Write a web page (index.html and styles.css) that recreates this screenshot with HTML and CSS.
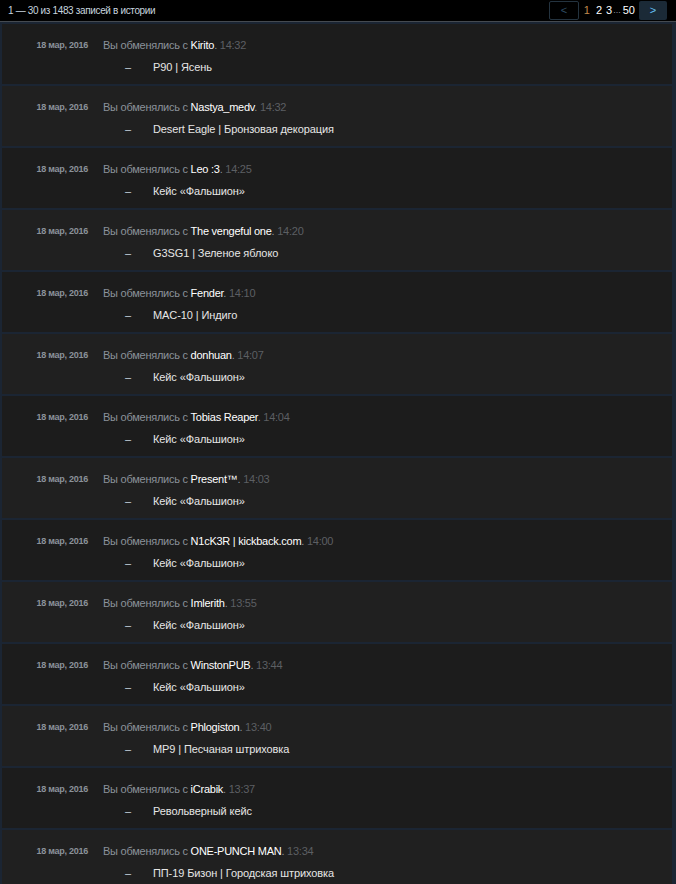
FILE: index.html
```html
<!DOCTYPE html>
<html lang="ru">
<head>
<meta charset="utf-8">
<link rel="stylesheet" href="styles.css">
</head>
<body>
<div class="top">
  <div class="summary">1 — 30 из 1483 записей в истории</div>
  <div class="pager">
    <span class="pbtn prev">&lt;</span>
    <span class="pnum cur">1</span>
    <span class="pnum n2">2</span>
    <span class="pnum n3">3</span>
    <span class="pdots">...</span>
    <span class="pnum last">50</span>
    <span class="pbtn next">&gt;</span>
  </div>
</div>
<div class="list">
  <div class="row"><div class="date">18 мар, 2016</div><div class="body"><div class="desc">Вы обменялись с <span class="name">Kirito</span>. <span class="time">14:32</span></div><div class="item"><span class="dash">–</span><span class="iname">P90 | Ясень</span></div></div></div>
  <div class="row"><div class="date">18 мар, 2016</div><div class="body"><div class="desc">Вы обменялись с <span class="name">Nastya_medv</span>. <span class="time">14:32</span></div><div class="item"><span class="dash">–</span><span class="iname">Desert Eagle | Бронзовая декорация</span></div></div></div>
  <div class="row"><div class="date">18 мар, 2016</div><div class="body"><div class="desc">Вы обменялись с <span class="name">Leo :3</span>. <span class="time">14:25</span></div><div class="item"><span class="dash">–</span><span class="iname">Кейс «Фальшион»</span></div></div></div>
  <div class="row"><div class="date">18 мар, 2016</div><div class="body"><div class="desc">Вы обменялись с <span class="name">The vengeful one</span>. <span class="time">14:20</span></div><div class="item"><span class="dash">–</span><span class="iname">G3SG1 | Зеленое яблоко</span></div></div></div>
  <div class="row"><div class="date">18 мар, 2016</div><div class="body"><div class="desc">Вы обменялись с <span class="name">Fender</span>. <span class="time">14:10</span></div><div class="item"><span class="dash">–</span><span class="iname">MAC-10 | Индиго</span></div></div></div>
  <div class="row"><div class="date">18 мар, 2016</div><div class="body"><div class="desc">Вы обменялись с <span class="name">donhuan</span>. <span class="time">14:07</span></div><div class="item"><span class="dash">–</span><span class="iname">Кейс «Фальшион»</span></div></div></div>
  <div class="row"><div class="date">18 мар, 2016</div><div class="body"><div class="desc">Вы обменялись с <span class="name">Tobias Reaper</span>. <span class="time">14:04</span></div><div class="item"><span class="dash">–</span><span class="iname">Кейс «Фальшион»</span></div></div></div>
  <div class="row"><div class="date">18 мар, 2016</div><div class="body"><div class="desc">Вы обменялись с <span class="name">Present™</span>. <span class="time">14:03</span></div><div class="item"><span class="dash">–</span><span class="iname">Кейс «Фальшион»</span></div></div></div>
  <div class="row"><div class="date">18 мар, 2016</div><div class="body"><div class="desc">Вы обменялись с <span class="name">N1cK3R | kickback.com</span>. <span class="time">14:00</span></div><div class="item"><span class="dash">–</span><span class="iname">Кейс «Фальшион»</span></div></div></div>
  <div class="row"><div class="date">18 мар, 2016</div><div class="body"><div class="desc">Вы обменялись с <span class="name">Imlerith</span>. <span class="time">13:55</span></div><div class="item"><span class="dash">–</span><span class="iname">Кейс «Фальшион»</span></div></div></div>
  <div class="row"><div class="date">18 мар, 2016</div><div class="body"><div class="desc">Вы обменялись с <span class="name">WinstonPUB</span>. <span class="time">13:44</span></div><div class="item"><span class="dash">–</span><span class="iname">Кейс «Фальшион»</span></div></div></div>
  <div class="row"><div class="date">18 мар, 2016</div><div class="body"><div class="desc">Вы обменялись с <span class="name">Phlogiston</span>. <span class="time">13:40</span></div><div class="item"><span class="dash">–</span><span class="iname">MP9 | Песчаная штриховка</span></div></div></div>
  <div class="row"><div class="date">18 мар, 2016</div><div class="body"><div class="desc">Вы обменялись с <span class="name">iCrabik</span>. <span class="time">13:37</span></div><div class="item"><span class="dash">–</span><span class="iname">Револьверный кейс</span></div></div></div>
  <div class="row"><div class="date">18 мар, 2016</div><div class="body"><div class="desc">Вы обменялись с <span class="name">ONE-PUNCH MAN</span>. <span class="time">13:34</span></div><div class="item"><span class="dash">–</span><span class="iname">ПП-19 Бизон | Городская штриховка</span></div></div></div>
</div>
</body>
</html>
```
FILE: styles.css
```css
html, body {
  margin: 0;
  padding: 0;
  background: #000;
  font-family: "Liberation Sans", Arial, sans-serif;
  overflow: hidden;
}
.top {
  height: 21px;
  display: flex;
  align-items: center;
  justify-content: space-between;
  padding: 0 9px 0 8px;
  background: #000;
  border-bottom: 1px solid #454a50;
}
.summary {
  font-size: 10px;
  letter-spacing: -0.35px;
  color: #c6d4df;
}
.pager {
  display: flex;
  align-items: center;
  height: 19px;
  margin-top: -1px;
  font-size: 11px;
}
.pbtn {
  box-sizing: border-box;
  height: 19px;
  display: flex;
  align-items: center;
  justify-content: center;
  border-radius: 2px;
  font-size: 11px;
}
.prev {
  width: 30px;
  border: 1px solid #24333f;
  color: #2e4b63;
  margin-right: 5px;
}
.next {
  width: 28px;
  background: #1b2a37;
  color: #66c0f4;
  margin-left: 4px;
}
.pnum {
  color: #ffffff;
}
.pnum.cur {
  color: #c08a4c;
  margin-right: 6px;
}
.pnum.n2 {
  margin-right: 4px;
}
.pnum.n3 {
  margin-right: 1px;
}
.pdots {
  color: #8f98a0;
  font-size: 9px;
  margin-right: 2px;
}
.list {
  border-top: 2px solid #1b2533;
  border-left: 2px solid #1b2533;
  border-right: 4px solid #1b2533;
}
.row {
  height: 60px;
  border-bottom: 2px solid #1b2533;
  display: flex;
  background: #1c1c1c;
}
.row:nth-child(even) {
  background: #202020;
}
.date {
  width: 86px;
  text-align: right;
  font-size: 9px;
  letter-spacing: -0.25px;
  font-weight: bold;
  color: #8b929a;
  padding-top: 15px;
  line-height: 12px;
}
.body {
  padding-left: 15px;
  padding-top: 14px;
}
.desc {
  font-size: 11px;
  letter-spacing: -0.25px;
  line-height: 14px;
  color: #8b929a;
}
.name {
  color: #ffffff;
}
.time {
  color: #5c5f63;
}
.item {
  display: flex;
  margin-top: 8px;
  font-size: 11px;
  letter-spacing: -0.1px;
  line-height: 14px;
  color: #e6e6e6;
}
.dash {
  width: 50px;
  padding-left: 22px;
  box-sizing: border-box;
  color: #c6d4df;
}
```
